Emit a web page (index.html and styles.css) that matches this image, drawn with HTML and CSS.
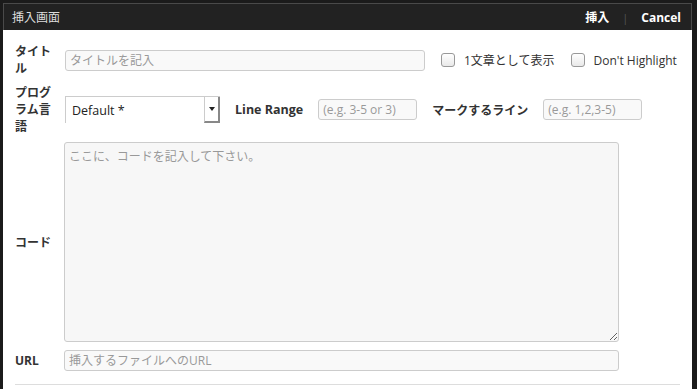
FILE: index.html
```html
<!DOCTYPE html>
<html lang="ja">
<head>
  <meta charset="UTF-8">
  <title>挿入画面</title>
  <link rel="stylesheet" href="styles.css">
</head>
<body>
  <div class="dialog">
    <header class="dialog-head">
      <span class="dialog-title">挿入画面</span>
      <div class="dialog-actions">
        <a class="action">挿入</a>
        <span class="sep">|</span>
        <a class="action">Cancel</a>
      </div>
    </header>
    <div class="dialog-body">
      <div class="row row-title">
        <label class="label">タイトル</label>
        <input class="field field-title" type="text" placeholder="タイトルを記入">
        <label class="check"><span class="box"></span>1文章として表示</label>
        <label class="check"><span class="box"></span>Don't Highlight</label>
      </div>
      <div class="row row-lang">
        <label class="label">プログラム言語</label>
        <div class="select">
          <span class="select-value">Default *</span>
          <span class="select-btn"><span class="caret"></span></span>
        </div>
        <label class="inline-label">Line Range</label>
        <input class="field field-small" type="text" placeholder="(e.g. 3-5 or 3)">
        <label class="inline-label inline-label-jp">マークするライン</label>
        <input class="field field-small" type="text" placeholder="(e.g. 1,2,3-5)">
      </div>
      <div class="row row-code">
        <label class="label">コード</label>
        <textarea class="code" placeholder="ここに、コードを記入して下さい。"></textarea>
      </div>
      <div class="row row-url">
        <label class="label">URL</label>
        <input class="field field-url" type="text" placeholder="挿入するファイルへのURL">
      </div>
      <hr class="divider">
    </div>
  </div>
</body>
</html>
```

FILE: styles.css
```css
body {
  margin: 0;
  background-color: #1b1b1b;
  font-family: "Open Sans", "Noto Sans CJK JP", sans-serif;
  color: #333;
  height: 389px;
  overflow: hidden;
}
.dialog {
  margin: 3px 0 0 3px;
  width: 689px;
  background-color: white;
  height: 386px;
}
.dialog-head {
  display: flex;
  align-items: center;
  justify-content: space-between;
  height: 26px;
  background-color: #222;
  border: 1px solid #4a4a4a;
  border-bottom: none;
  padding: 0 10px 0 8px;
}
.dialog-title {
  color: #ddd;
  font-size: 12px;
}
.dialog-actions {
  display: flex;
  align-items: center;
  gap: 13px;
  font-size: 12px;
}
.action {
  color: #fff;
  font-weight: bold;
}
.sep {
  color: #555;
  font-size: 11px;
}
.dialog-body {
  padding: 13px 12px 0 12px;
}
.row {
  display: flex;
  align-items: center;
}
.label {
  width: 40px;
  margin-right: 9px;
  font-size: 12px;
  font-weight: bold;
  line-height: 17px;
  color: #333;
  flex: none;
}
.field {
  box-sizing: border-box;
  height: 21px;
  border: 1px solid #ccc;
  border-radius: 3px;
  background-color: #f9f9f9;
  padding: 0 4px;
  font-family: inherit;
  font-size: 12px;
  color: #333;
  flex: none;
}
.field::placeholder {
  color: #999;
}
.field-title {
  width: 360px;
  margin-left: 1px;
}
.check {
  display: flex;
  align-items: center;
  flex: none;
  white-space: nowrap;
  font-size: 12px;
  color: #333;
  margin-left: 16px;
}
.check + .check {
  margin-left: 16px;
}
.box {
  width: 12px;
  height: 12px;
  border: 1px solid #999;
  border-radius: 3px;
  background: linear-gradient(#fff, #e9e9e9);
  margin-right: 9px;
}
.row-lang {
  margin-top: 7px;
}
.select {
  display: flex;
  box-sizing: border-box;
  width: 155px;
  height: 27px;
  margin-left: 1px;
  border: 1px solid #ccc;
  border-right: none;
  border-bottom: none;
  background-color: #fff;
  flex: none;
}
.select-value {
  flex: 1;
  font-size: 12.5px;
  color: #222;
  padding: 5px 0 0 6px;
}
.select-btn {
  width: 13px;
  display: flex;
  align-items: center;
  justify-content: center;
  background-color: #fff;
  border-left: 1px solid #ccc;
  border-right: 2px solid #888;
  border-bottom: 2px solid #888;
}
.caret {
  width: 0;
  height: 0;
  border-left: 3px solid transparent;
  border-right: 3px solid transparent;
  border-top: 4px solid #222;
}
.inline-label {
  font-size: 12.5px;
  font-weight: bold;
  white-space: nowrap;
  margin: 0 15px 0 15px;
}
.inline-label-jp {
  font-size: 12px;
}
.field-small {
  width: 99px;
}
.row-code {
  margin-top: 7px;
}
.code {
  box-sizing: border-box;
  width: 555px;
  height: 200px;
  border: 1px solid #ccc;
  border-radius: 3px;
  background-color: #f7f7f7;
  padding: 4px;
  font-family: inherit;
  font-size: 12px;
  margin: 0;
}
.code::placeholder {
  color: #999;
}
.row-url {
  margin-top: 8px;
}
.field-url {
  width: 555px;
}
.divider {
  border: none;
  border-top: 1px solid #ddd;
  margin: 13px 0 0 0;
  width: 665px;
}
```
